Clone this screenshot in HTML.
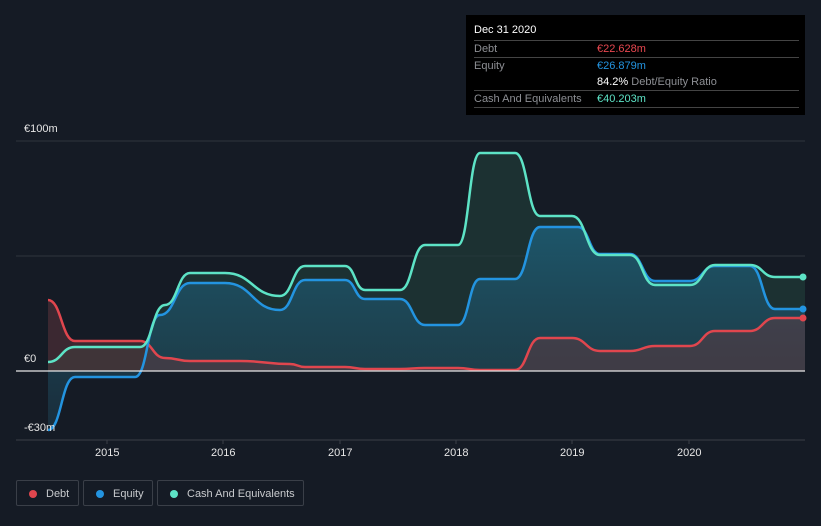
<!DOCTYPE html>
<html><head><style>
body{margin:0;width:821px;height:526px;background:#151b25;font-family:"Liberation Sans",sans-serif;overflow:hidden;position:relative}
.tt{position:absolute;left:466px;top:15px;width:339px;height:100px;background:#000;color:#fff;font-size:11px}
.row{position:absolute;left:8px;width:325px;border-top:1px solid #444;height:16px;line-height:16px}
.lab{color:#8d8f94}
.v{position:absolute;left:123px}
.leg{position:absolute;top:480px;height:26px;border:1px solid #3a3f48;border-radius:2px;color:#c8cacd;font-size:11px;line-height:26px;box-sizing:border-box;padding-left:29px;white-space:nowrap}
.leg i{position:absolute;left:12px;top:9px;width:8px;height:8px;border-radius:50%}
.ax{position:absolute;color:#e6e6e6;font-size:11px}
</style></head><body>
<svg width="821" height="526" style="position:absolute;left:0;top:0">
<defs><linearGradient id="eq" x1="0" y1="0" x2="0" y2="1"><stop offset="0" stop-color="#1d5a70" stop-opacity=".9"/><stop offset="1" stop-color="#1d3a4a" stop-opacity=".6"/></linearGradient></defs>
<line x1="16" y1="141" x2="805" y2="141" stroke="#2e343d"/>
<line x1="16" y1="256" x2="805" y2="256" stroke="#2e343d"/>
<line x1="16" y1="440" x2="805" y2="440" stroke="#3a3f48"/>
<path id="cf" fill="#1f3a38" fill-opacity=".7"/>
<path id="ef" fill="url(#eq)"/>
<path id="df" fill="#6b3a40" fill-opacity=".45"/>
<g fill="none" stroke-width="2.5" stroke-linejoin="round">
<path id="dl" stroke="#e0464e"/>
<path id="el" stroke="#2394e0"/>
<path id="cl" stroke="#5de3c6"/>
</g>
<line x1="16" y1="371" x2="805" y2="371" stroke="#e6e6e6" stroke-width="1.2"/>
<circle cx="803" cy="277" r="3.5" fill="#5de3c6"/><circle cx="803" cy="309" r="3.5" fill="#2394e0"/><circle cx="803" cy="318" r="3.5" fill="#e0464e"/>
<g stroke="#3a3f48"><line x1="107" y1="440" x2="107" y2="444"/><line x1="223" y1="440" x2="223" y2="444"/><line x1="340" y1="440" x2="340" y2="444"/><line x1="456" y1="440" x2="456" y2="444"/><line x1="572" y1="440" x2="572" y2="444"/><line x1="689" y1="440" x2="689" y2="444"/></g>
</svg>
<script>
function sm(p){var d="M"+p[0][0]+","+p[0][1];for(var i=1;i<p.length;i++){var a=p[i-1],b=p[i],h=(b[0]-a[0])/2;d+=" C"+(a[0]+h)+","+a[1]+" "+(b[0]-h)+","+b[1]+" "+b[0]+","+b[1];}return d;}
function pr(s){return s.split(" ").map(function(t){return t.split(",").map(Number);});}
var C=pr("48,362 75,347 140,347 165,305 190,273 225,273 280,296 305,266 345,266 365,290 400,290 425,245 458,245 480,153 515,153 540,216 572,216 600,255 630,255 655,285 690,285 715,265 750,265 775,277 805,277");
var E=pr("48,430 75,377 135,377 160,315 190,283 225,283 280,310 305,280 345,280 365,299 400,299 425,325 458,325 480,279 515,279 540,227 578,227 600,254 630,254 655,281 690,281 715,266 750,266 775,309 805,309");
var D=pr("48,300 75,341 140,341 165,358 190,361 240,361 290,364 305,367 345,367 365,369 400,369 425,368 458,368 480,370 515,370 540,338 572,338 600,351 630,351 655,346 690,346 715,331 750,331 775,318 805,318");
[["c",C],["e",E],["d",D]].forEach(function(x){var l=sm(x[1]);document.getElementById(x[0]+"l").setAttribute("d",l);document.getElementById(x[0]+"f").setAttribute("d",l+" L805,371 L48,371 Z");});
</script>
<div class="ax" style="left:24px;top:123px">€100m</div>
<div class="ax" style="left:24px;top:353px">€0</div>
<div class="ax" style="left:24px;top:422px">-€30m</div>
<div class="ax" style="left:95px;top:447px">2015</div>
<div class="ax" style="left:211px;top:447px">2016</div>
<div class="ax" style="left:328px;top:447px">2017</div>
<div class="ax" style="left:444px;top:447px">2018</div>
<div class="ax" style="left:560px;top:447px">2019</div>
<div class="ax" style="left:677px;top:447px">2020</div>
<div class="tt">
<div style="position:absolute;left:8px;top:9px">Dec 31 2020</div>
<div class="row" style="top:25px"><span class="lab">Debt</span><span class="v" style="color:#e8474f">€22.628m</span></div>
<div class="row" style="top:42px"><span class="lab">Equity</span><span class="v" style="color:#2394e0">€26.879m</span></div>
<div class="row" style="top:59px;border:none"><span class="v"><b style="font-weight:normal;color:#fff">84.2%</b> <span class="lab">Debt/Equity Ratio</span></span></div>
<div class="row" style="top:75px"><span class="lab">Cash And Equivalents</span><span class="v" style="color:#5de3c6">€40.203m</span></div>
<div class="row" style="top:92px;height:0"></div>
</div>
<div class="leg" style="left:16px;width:63px"><i style="background:#e0464e"></i>Debt</div>
<div class="leg" style="left:83px;width:70px"><i style="background:#2394e0"></i>Equity</div>
<div class="leg" style="left:157px;width:147px"><i style="background:#5de3c6"></i>Cash And Equivalents</div>
</body></html>
